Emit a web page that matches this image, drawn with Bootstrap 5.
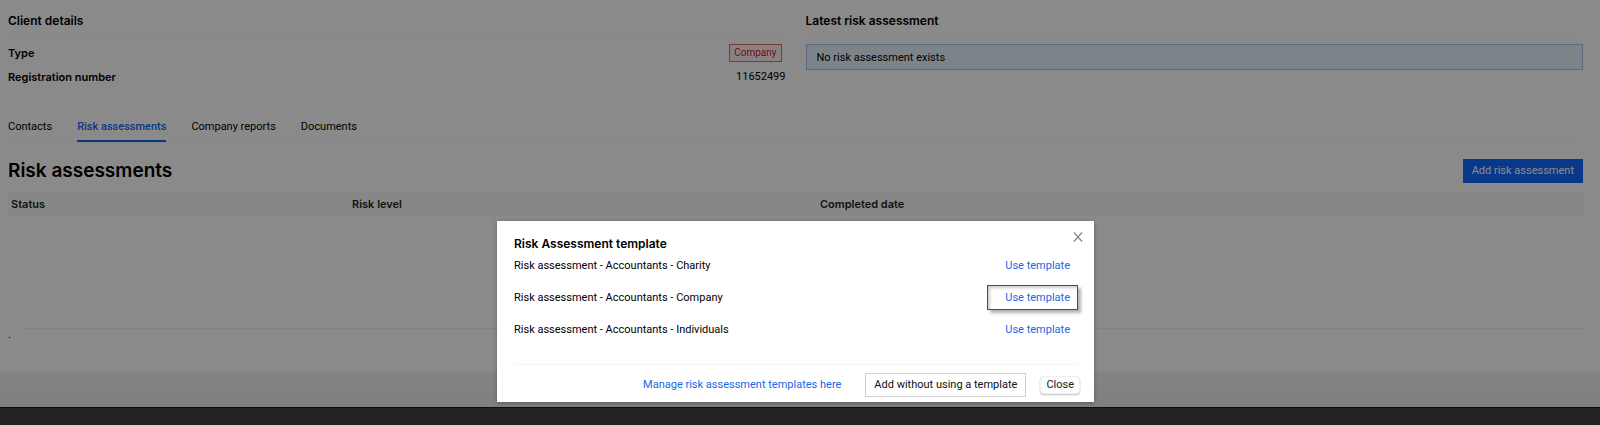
<!DOCTYPE html>
<html lang="en">
<head>
<meta charset="utf-8">
<meta name="viewport" content="width=device-width, initial-scale=1">
<title>Client – Risk assessments</title>
<link href="https://cdn.jsdelivr.net/npm/bootstrap@5.3.0/dist/css/bootstrap.min.css" rel="stylesheet">
<style>
  body { font-family: Roboto, "Liberation Sans", sans-serif; font-size: 11px; line-height: 16px; color: #000; background: #222; }
  h1, h2, th, b { font-family: Inter, "Liberation Sans", sans-serif; }
  .page-area { background: #fff; padding: 0 17px 0 8px; }
  .section-title { font-size: 12px; line-height: 16px; font-weight: 600; margin: 0; padding: 13px 0 7px; border-bottom: 1px solid #f7f7f7; }
  .detail-grid { --bs-gutter-x: 20px; min-height: 110px; }
  .detail-row { height: 24px; }
  .type-tag { font-size: 10px; line-height: 16px; color: #cf1322; background: #fff1f0; border: 1px solid #e0706c; padding: 0 4px; margin-right: 4px; }
  .info-box { background: #e6f4ff; border: 1px solid #a6c4e4; padding: 5px 10px 3px; margin-top: 7px; }
  .client-tabs { gap: 25px; border-bottom: 1px solid #f7f7f7; }
  .client-tabs .nav-link { color: #000; padding: 9px 0 5px; border-bottom: 2px solid transparent; }
  .client-tabs .nav-link.active { color: #1268f0; font-weight: 500; border-color: #1268f0; }
  .page-title { font-size: 19px; line-height: 24px; font-weight: 600; margin: 0; }
  .flat-btn { --bs-btn-font-size: 11px; --bs-btn-line-height: 16px; --bs-btn-border-radius: 0; --bs-btn-padding-y: 3px; --bs-btn-padding-x: 8px; }
  .btn-add { --bs-btn-color: #fff; --bs-btn-bg: #1268ff; --bs-btn-border-color: #1268ff; }
  .risk-table { table-layout: fixed; --bs-table-bg: #fafafa; }
  .risk-table th { font-weight: 600; padding: 5px 3px 4px; border: 0; }
  .col-status { width: 341px; }
  .col-level { width: 468px; }
  .page-rule { margin: 112px 0 0 13px; border-top: 1px solid #f0f0f0; }
  .page-end { height: 36px; margin: 0 -17px 0 -8px; background: linear-gradient(#f4f4f4, #ebebeb); }
  .dim-layer { position: absolute; inset: 0; background: rgba(0,0,0,.46); }
  .dialog-layer { position: absolute; inset: 0; padding: 0 9px 5px 0; }
  .template-dialog { width: 597px; max-width: 100%; background: #fff; padding: 15px 17px 5px; box-shadow: 0 1px 4px rgba(0,0,0,.3); position: relative; }
  .dialog-title { font-size: 12px; line-height: 16px; font-weight: 600; margin: 0; }
  .template-row { height: 32px; }
  .template-name { padding-top: 6px; }
  .plain-link { color: #1668e8; text-decoration: none; }
  .use-link { line-height: 24px; padding: 2px 7px 0 18px; position: relative; }
  .use-link.marked::after { content: ""; position: absolute; inset: 1px -1px 0 0; border: 1px solid #f00; box-shadow: 3px 3px 3px rgba(0,0,0,.3), inset 2px 2px 3px rgba(0,0,0,.2); }
  .dialog-close { position: absolute; top: 10px; right: 10px; width: 12px; height: 12px; }
  .dialog-foot { border-top: 1px solid #f4f4f4; padding-top: 8px; }
  .btn-plain { --bs-btn-color: #111; --bs-btn-bg: #fff; --bs-btn-border-color: #d0d0d0; margin-right: 14px; }
  .btn-soft { line-height: 16px; padding: 0 5px; margin-right: -3px; background: #fdfdfd; border: 1px solid #eee; border-radius: 4px; box-shadow: 0 1px 2px rgba(0,0,0,.25); color: #222; }
  .bottom-bar { height: 18px; background: #222; border-top: 1px solid #0c0c0c; }
</style>
</head>
<body class="d-flex flex-column min-vh-100">
<div class="position-relative flex-grow-1 d-flex flex-column page-area">
  <div class="row detail-grid">
    <section class="col-6">
      <h2 class="section-title">Client details</h2>
      <div class="pt-1">
        <div class="detail-row d-flex justify-content-between align-items-center"><b class="fw-semibold">Type</b><span class="type-tag">Company</span></div>
        <div class="detail-row d-flex justify-content-between align-items-center"><b class="fw-semibold">Registration number</b><span>11652499</span></div>
      </div>
    </section>
    <section class="col-6">
      <h2 class="section-title">Latest risk assessment</h2>
      <div class="info-box">No risk assessment exists</div>
    </section>
  </div>
  <nav class="nav client-tabs">
    <a class="nav-link" href="#contacts">Contacts</a>
    <a class="nav-link active" href="#risk">Risk assessments</a>
    <a class="nav-link" href="#reports">Company reports</a>
    <a class="nav-link" href="#documents">Documents</a>
  </nav>
  <div class="d-flex justify-content-between align-items-center mt-3 mb-2">
    <h1 class="page-title">Risk assessments</h1>
    <button type="button" class="btn flat-btn btn-add">Add risk assessment</button>
  </div>
  <table class="table risk-table mb-0">
    <thead><tr><th class="col-status">Status</th><th class="col-level">Risk level</th><th>Completed date</th></tr></thead>
  </table>
  <div class="page-rule"></div>
  <div class="lh-1">.</div>
  <div class="page-end mt-auto"></div>

  <div class="dim-layer"></div>
  <div class="dialog-layer d-flex justify-content-center align-items-end">
    <div class="template-dialog" role="dialog" aria-labelledby="dialogTitle">
      <button type="button" class="dialog-close btn p-0 border-0 d-flex" aria-label="Dismiss">
        <svg width="12" height="12" viewBox="0 0 12 12" fill="none" stroke="#888" stroke-width="1.2"><path d="M2 1.500 10 10.500M10 1.500 2 10.500"/></svg>
      </button>
      <h2 class="dialog-title" id="dialogTitle">Risk Assessment template</h2>
      <div class="mb-3">
        <div class="template-row d-flex justify-content-between align-items-start"><span class="template-name">Risk assessment - Accountants - Charity</span><a href="#charity" class="plain-link use-link">Use template</a></div>
        <div class="template-row d-flex justify-content-between align-items-start"><span class="template-name">Risk assessment - Accountants - Company</span><a href="#company" class="plain-link use-link marked">Use template</a></div>
        <div class="template-row d-flex justify-content-between align-items-start"><span class="template-name">Risk assessment - Accountants - Individuals</span><a href="#individuals" class="plain-link use-link">Use template</a></div>
      </div>
      <div class="dialog-foot d-flex justify-content-end align-items-center">
        <a href="#templates" class="plain-link me-4">Manage risk assessment templates here</a>
        <button type="button" class="btn flat-btn btn-plain">Add without using a template</button>
        <button type="button" class="btn-soft">Close</button>
      </div>
    </div>
  </div>
</div>
<footer class="bottom-bar"></footer>
<script src="https://cdn.jsdelivr.net/npm/bootstrap@5.3.0/dist/js/bootstrap.bundle.min.js"></script>
</body>
</html>
